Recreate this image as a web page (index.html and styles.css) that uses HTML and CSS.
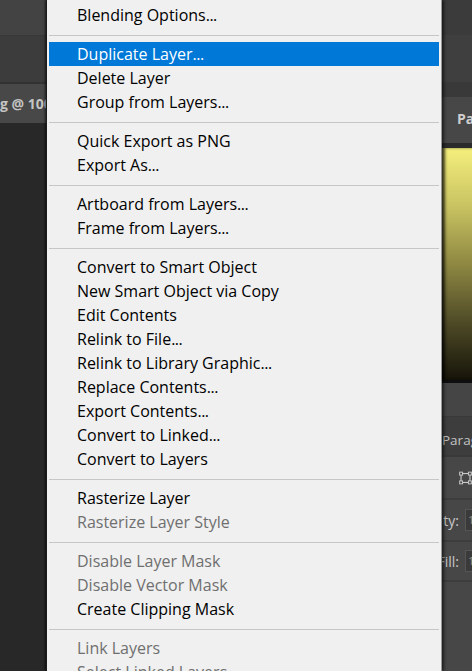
FILE: index.html
```html
<!DOCTYPE html>
<html>
<head>
<meta charset="utf-8">
<link rel="stylesheet" href="styles.css">
</head>
<body>
<div class="screen">
  <div class="left">
    <div class="lb lb1"></div>
    <div class="lb lb2"></div>
    <div class="lb lb3"><span class="tab">g @ 100%</span></div>
    <div class="lb lb4"></div>
  </div>
  <div class="menu">
    <div class="item">Blending Options<span class="dots">...</span></div>
    <div class="sep"></div>
    <div class="item hl">Duplicate Layer<span class="dots">...</span></div>
    <div class="item">Delete Layer</div>
    <div class="item">Group from Layers<span class="dots">...</span></div>
    <div class="sep"></div>
    <div class="item">Quick Export as PNG</div>
    <div class="item">Export As<span class="dots">...</span></div>
    <div class="sep"></div>
    <div class="item">Artboard from Layers<span class="dots">...</span></div>
    <div class="item">Frame from Layers<span class="dots">...</span></div>
    <div class="sep"></div>
    <div class="item">Convert to Smart Object</div>
    <div class="item">New Smart Object via Copy</div>
    <div class="item">Edit Contents</div>
    <div class="item">Relink to File<span class="dots">...</span></div>
    <div class="item">Relink to Library Graphic<span class="dots">...</span></div>
    <div class="item">Replace Contents<span class="dots">...</span></div>
    <div class="item">Export Contents<span class="dots">...</span></div>
    <div class="item">Convert to Linked<span class="dots">...</span></div>
    <div class="item">Convert to Layers</div>
    <div class="sep"></div>
    <div class="item">Rasterize Layer</div>
    <div class="item dis">Rasterize Layer Style</div>
    <div class="sep"></div>
    <div class="item dis">Disable Layer Mask</div>
    <div class="item dis">Disable Vector Mask</div>
    <div class="item">Create Clipping Mask</div>
    <div class="sep"></div>
    <div class="item dis">Link Layers</div>
    <div class="item dis">Select Linked Layers</div>
  </div>
  <div class="right">
    <div class="rb rb1"></div>
    <div class="rb rb2"></div>
    <div class="rb rb3"></div>
    <div class="rb rb4"><span class="ptab">Pa</span></div>
    <div class="rb grad"></div>
    <div class="rb rb6"></div>
    <div class="rb rb7"><span class="para">Parag</span></div>
    <div class="rb rb8">
      <svg class="xform" width="16" height="16" viewBox="0 0 16 16">
        <rect x="2.5" y="2.5" width="11" height="11" fill="none" stroke="#c9c9c9" stroke-width="1.4"/>
        <rect x="0.8" y="0.8" width="3.6" height="3.6" fill="#474747" stroke="#c9c9c9" stroke-width="1.2"/>
        <rect x="11.6" y="0.8" width="3.6" height="3.6" fill="#474747" stroke="#c9c9c9" stroke-width="1.2"/>
        <rect x="0.8" y="11.6" width="3.6" height="3.6" fill="#474747" stroke="#c9c9c9" stroke-width="1.2"/>
        <rect x="11.6" y="11.6" width="3.6" height="3.6" fill="#474747" stroke="#c9c9c9" stroke-width="1.2"/>
      </svg>
    </div>
    <div class="rb field f1"><span class="lbl">ty:</span><span class="box">1</span></div>
    <div class="rb field f2"><span class="lbl">Fill:</span><span class="box">1</span></div>
    <div class="rb rb9"></div>
  </div>
</div>
</body>
</html>
```

FILE: styles.css
```css
* { box-sizing: border-box; }
html, body { margin: 0; padding: 0; }
body {
  width: 472px;
  height: 671px;
  overflow: hidden;
  background: #282828;
  font-family: "Open Sans", "Noto Sans", sans-serif;
}
.screen {
  display: flex;
  width: 472px;
  height: 671px;
  overflow: hidden;
}

/* left panel */
.left {
  width: 46px;
  flex: none;
  display: flex;
  flex-direction: column;
  overflow: hidden;
}
.lb { flex: none; }
.lb1 { height: 36px; background: #434343; border-bottom: 1px solid #383838; }
.lb2 { height: 48px; background: #3c3c3c; border-bottom: 2px solid #333; }
.lb3 {
  height: 39px;
  background: #484848;
  display: flex;
  align-items: center;
  white-space: nowrap;
  overflow: hidden;
}
.tab {
  color: #c4c4c4;
  font-weight: 700;
  font-size: 14px;
}
.lb4 { flex: 1; background: #282828; }

/* menu */
.menu {
  width: 396px;
  flex: none;
  height: 671px;
  background: #f0f0f0;
  border-left: 1px solid #1c1c1c;
  border-right: 1px solid #9a9a9a;
  padding-top: 3px;
  position: relative;
  z-index: 2;
  box-shadow: -1px 0 2px rgba(0,0,0,0.6), 2px 0 3px rgba(0,0,0,0.55);
  overflow: hidden;
}
.item {
  height: 24px;
  padding-top: 1px;
  line-height: 23px;
  margin: 0 2px;
  padding-left: 28px;
  font-size: 16px;
  color: #000;
  white-space: nowrap;
}
.dots { letter-spacing: -0.5px; }
.item.hl { background: #0078d7; color: #fff; }
.item.dis { color: #6f6f6f; }
.sep {
  height: 15px;
  margin: 0 2px;
  display: flex;
  align-items: center;
}
.sep::before {
  content: "";
  display: block;
  width: 100%;
  height: 1px;
  margin-top: 1px;
  background: #c6c6c6;
}

/* right panel */
.right {
  flex: 1;
  display: flex;
  flex-direction: column;
  overflow: hidden;
  background: #474747;
  color: #c8c8c8;
}
.rb { flex: none; white-space: nowrap; }
.rb1 { height: 35px; background: #3b3b3b; }
.rb2 { height: 47px; background: #3f3f3f; }
.rb3 { height: 15px; background: #393939; }
.rb4 {
  height: 51px;
  background: #474747;
  display: flex;
  align-items: center;
  padding-left: 15px;
  padding-bottom: 3px;
  border-bottom: 5px solid #2a2a2a;
}
.ptab {
  font-weight: 700;
  font-size: 14px;
  color: #cfcfcf;
}
.grad {
  height: 235px;
  background: linear-gradient(to bottom, #f4ef7c 0%, #c9c362 25%, #8e8842 50%, #4f4b27 75%, #161409 100%);
  box-shadow: inset 3px 0 3px rgba(0,0,0,0.5);
  border-bottom: 3px solid #0e0e0e;
}
.rb6 { height: 34px; background: #454545; border-bottom: 1px solid #393939; }
.rb7 {
  height: 40px;
  background: #3d3d3d;
  border-bottom: 2px solid #393939;
  display: flex;
  align-items: center;
  padding-top: 7px;
}
.para { font-size: 13.5px; color: #c2c2c2; }
.rb8 {
  height: 43px;
  display: flex;
  align-items: center;
  padding-left: 17px;
  border-bottom: 2px solid #3d3d3d;
}
.xform { display: block; }
.field {
  height: 42px;
  display: flex;
  justify-content: flex-end;
  align-items: center;
  border-bottom: 2px solid #3d3d3d;
}
.lbl { font-size: 14px; color: #c8c8c8; flex: none; }
.box {
  flex: none;
  width: 14px;
  height: 22px;
  margin-left: 6px;
  margin-right: -7px;
  background: #3a3a3a;
  border: 1px solid #555;
  color: #8a8a8a;
  font-size: 11px;
  line-height: 20px;
  padding-left: 2px;
}
.f2 { height: 40px; }
.rb9 { flex: 1; background: #474747; }
```
